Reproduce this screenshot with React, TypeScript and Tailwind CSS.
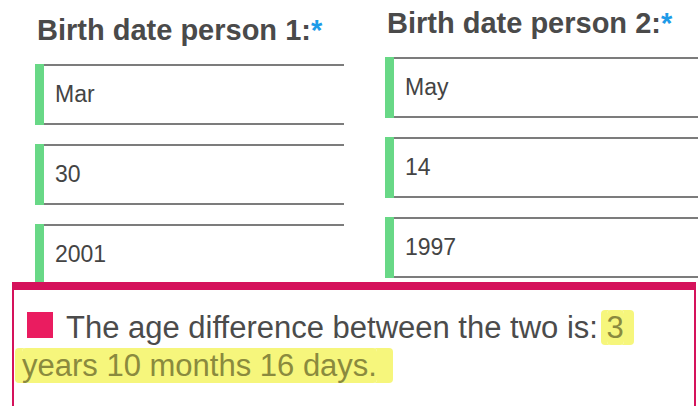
import React from "react";

function Field({ value }: { value: string }) {
  return (
    <div className="flex h-[61px] w-full border-y-2 border-[#7c7c7c] bg-white">
      <div className="w-[9px] -my-[2px] bg-[#68d886]" />
      <div className="flex items-center pl-[11px] text-[23px] text-[#444444]">{value}</div>
    </div>
  );
}

function Column({ n, values, top, width }: { n: number; values: string[]; top: string; width: string }) {
  return (
    <div className={`flex flex-col ${top} ${width} shrink-0`}>
      <h2 className="ml-[2px] mb-[18px] text-[29px] leading-[32px] font-bold text-[#4a4a4a] whitespace-nowrap">
        Birth date person {n}:<span className="text-[#1e9be8]">*</span>
      </h2>
      <div className="flex flex-col gap-[19px]">
        {values.map((v) => (
          <Field key={v} value={v} />
        ))}
      </div>
    </div>
  );
}

export default function App() {
  return (
    <div
      className="flex h-[406px] w-[698px] flex-col overflow-hidden bg-white"
      style={{ fontFamily: '"Liberation Sans", Arial, sans-serif' }}
    >
      <div className="flex h-[282px] shrink-0 gap-[41px] overflow-hidden pl-[35px]">
        <Column n={1} values={["Mar", "30", "2001"]} top="pt-[14px]" width="w-[309px]" />
        <Column n={2} values={["May", "14", "1997"]} top="pt-[7px]" width="w-[340px]" />
      </div>
      <div className="ml-[12px] w-[684px] flex-1 border-x-2 border-t-[8px] border-[#d5125b] pl-[8px] pr-[10px] pt-[19px]">
        <p className="text-[31px] leading-[38px] text-[#4b4b4b]">
          <span className="ml-[5px] mr-[13px] inline-block h-[26px] w-[26px] bg-[#ea1c60]" />
          The age difference between the two is:{" "}
          <span className="rounded-[4px] bg-[#f6f67c] text-[#8a8a3e] shadow-[-6px_0_0_#f6f67c,10px_0_0_#f6f67c]">3</span>{" "}
          <span className="rounded-[4px] bg-[#f6f67c] text-[#8a8a3e] shadow-[-7px_0_0_#f6f67c,16px_0_0_#f6f67c]">
            years 10 months 16 days.
          </span>
        </p>
      </div>
    </div>
  );
}
